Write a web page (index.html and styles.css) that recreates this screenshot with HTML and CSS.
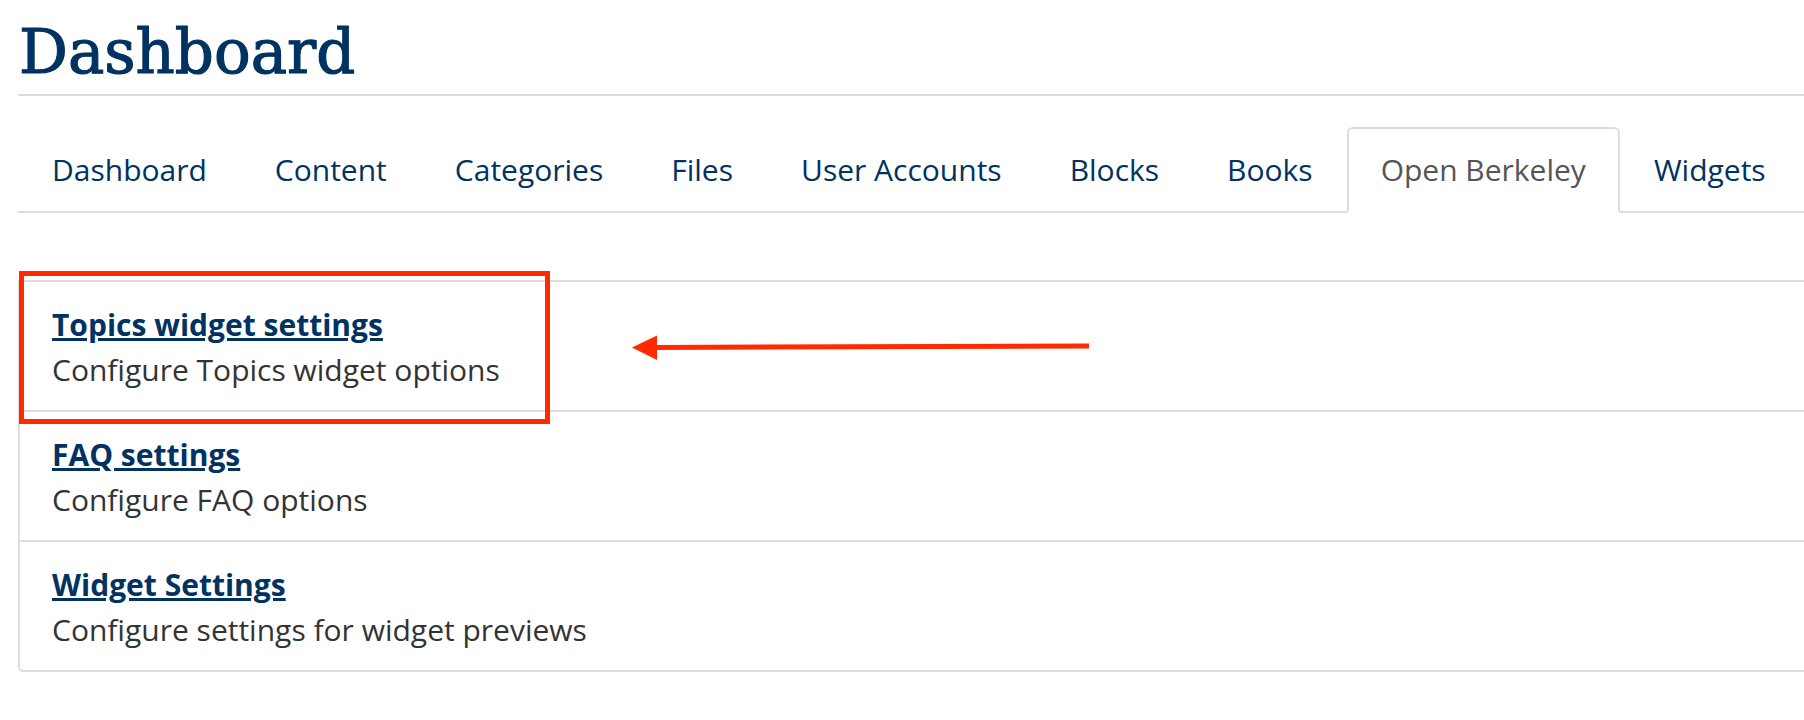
FILE: index.html
```html
<!DOCTYPE html>
<html lang="en">
<head>
  <meta charset="UTF-8">
  <meta name="viewport" content="width=device-width, initial-scale=1.0">
  <title>Dashboard</title>
  <link rel="stylesheet" href="styles.css">
</head>
<body>
  <div class="page">
    <h1 class="page-title">Dashboard</h1>

    <ul class="tabs">
      <li><a href="#">Dashboard</a></li>
      <li><a href="#">Content</a></li>
      <li><a href="#">Categories</a></li>
      <li><a href="#">Files</a></li>
      <li><a href="#">User Accounts</a></li>
      <li><a href="#">Blocks</a></li>
      <li><a href="#">Books</a></li>
      <li class="active"><a href="#">Open Berkeley</a></li>
      <li><a href="#">Widgets</a></li>
    </ul>

    <ul class="admin-list">
      <li>
        <a href="#">Topics widget settings</a>
        <div class="desc">Configure Topics widget options</div>
      </li>
      <li>
        <a href="#">FAQ settings</a>
        <div class="desc">Configure FAQ options</div>
      </li>
      <li>
        <a href="#">Widget Settings</a>
        <div class="desc">Configure settings for widget previews</div>
      </li>
    </ul>
  </div>

  <!-- annotation drawn over the screenshot -->
  <svg class="markup" width="1804" height="720" viewBox="0 0 1804 720">
    <rect x="21.5" y="273.5" width="526" height="148" fill="none" stroke="#ff2a00" stroke-width="5"/>
    <line x1="1089" y1="346" x2="652" y2="347.5" stroke="#ff2a00" stroke-width="5"/>
    <polygon points="632,347.5 657,335.5 657,360" fill="#ff2a00"/>
  </svg>
</body>
</html>
```

FILE: styles.css
```css
body {
  margin: 0;
  padding: 0;
  font-family: "Open Sans", Arial, sans-serif;
  background: #fff;
  color: #333;
  overflow: hidden;
}

.page {
  padding: 16px 0 0 18px;
}

.page-title {
  margin: 0;
  padding: 0 0 6px 1px;
  font-family: "DejaVu Serif", Georgia, serif;
  font-weight: normal;
  font-size: 61px;
  line-height: 72px;
  color: #003262;
  -webkit-text-stroke: 1.2px #003262;
  border-bottom: 2px solid #dedad6;
}

.tabs {
  list-style: none;
  margin: 31px 0 0;
  padding: 0;
  display: flex;
  border-bottom: 2px solid #ddd;
}

.tabs li {
  margin-bottom: -2px;
}

.tabs a {
  display: block;
  padding: 21px 32px;
  font-size: 30px;
  line-height: 40px;
  color: #003262;
  text-decoration: none;
  border: 2px solid transparent;
  border-radius: 6px 6px 0 0;
}

.tabs .active a {
  color: #555;
  background: #fff;
  border-color: #ddd #ddd #fff;
}

.admin-list {
  list-style: none;
  margin: 67px -20px 0 0;
  padding: 0;
  border: 2px solid #ddd;
  border-radius: 0 0 0 5px;
}

.admin-list li {
  padding: 20px 32px 18px;
  font-size: 30px;
  line-height: 45px;
  border-top: 2px solid #ddd;
}

.admin-list li:first-child {
  border-top: 0;
}

.admin-list a {
  font-weight: bold;
  color: #003262;
  text-decoration: underline;
}

.desc {
  color: #333;
}

.markup {
  position: absolute;
  top: 0;
  left: 0;
  pointer-events: none;
}
```
